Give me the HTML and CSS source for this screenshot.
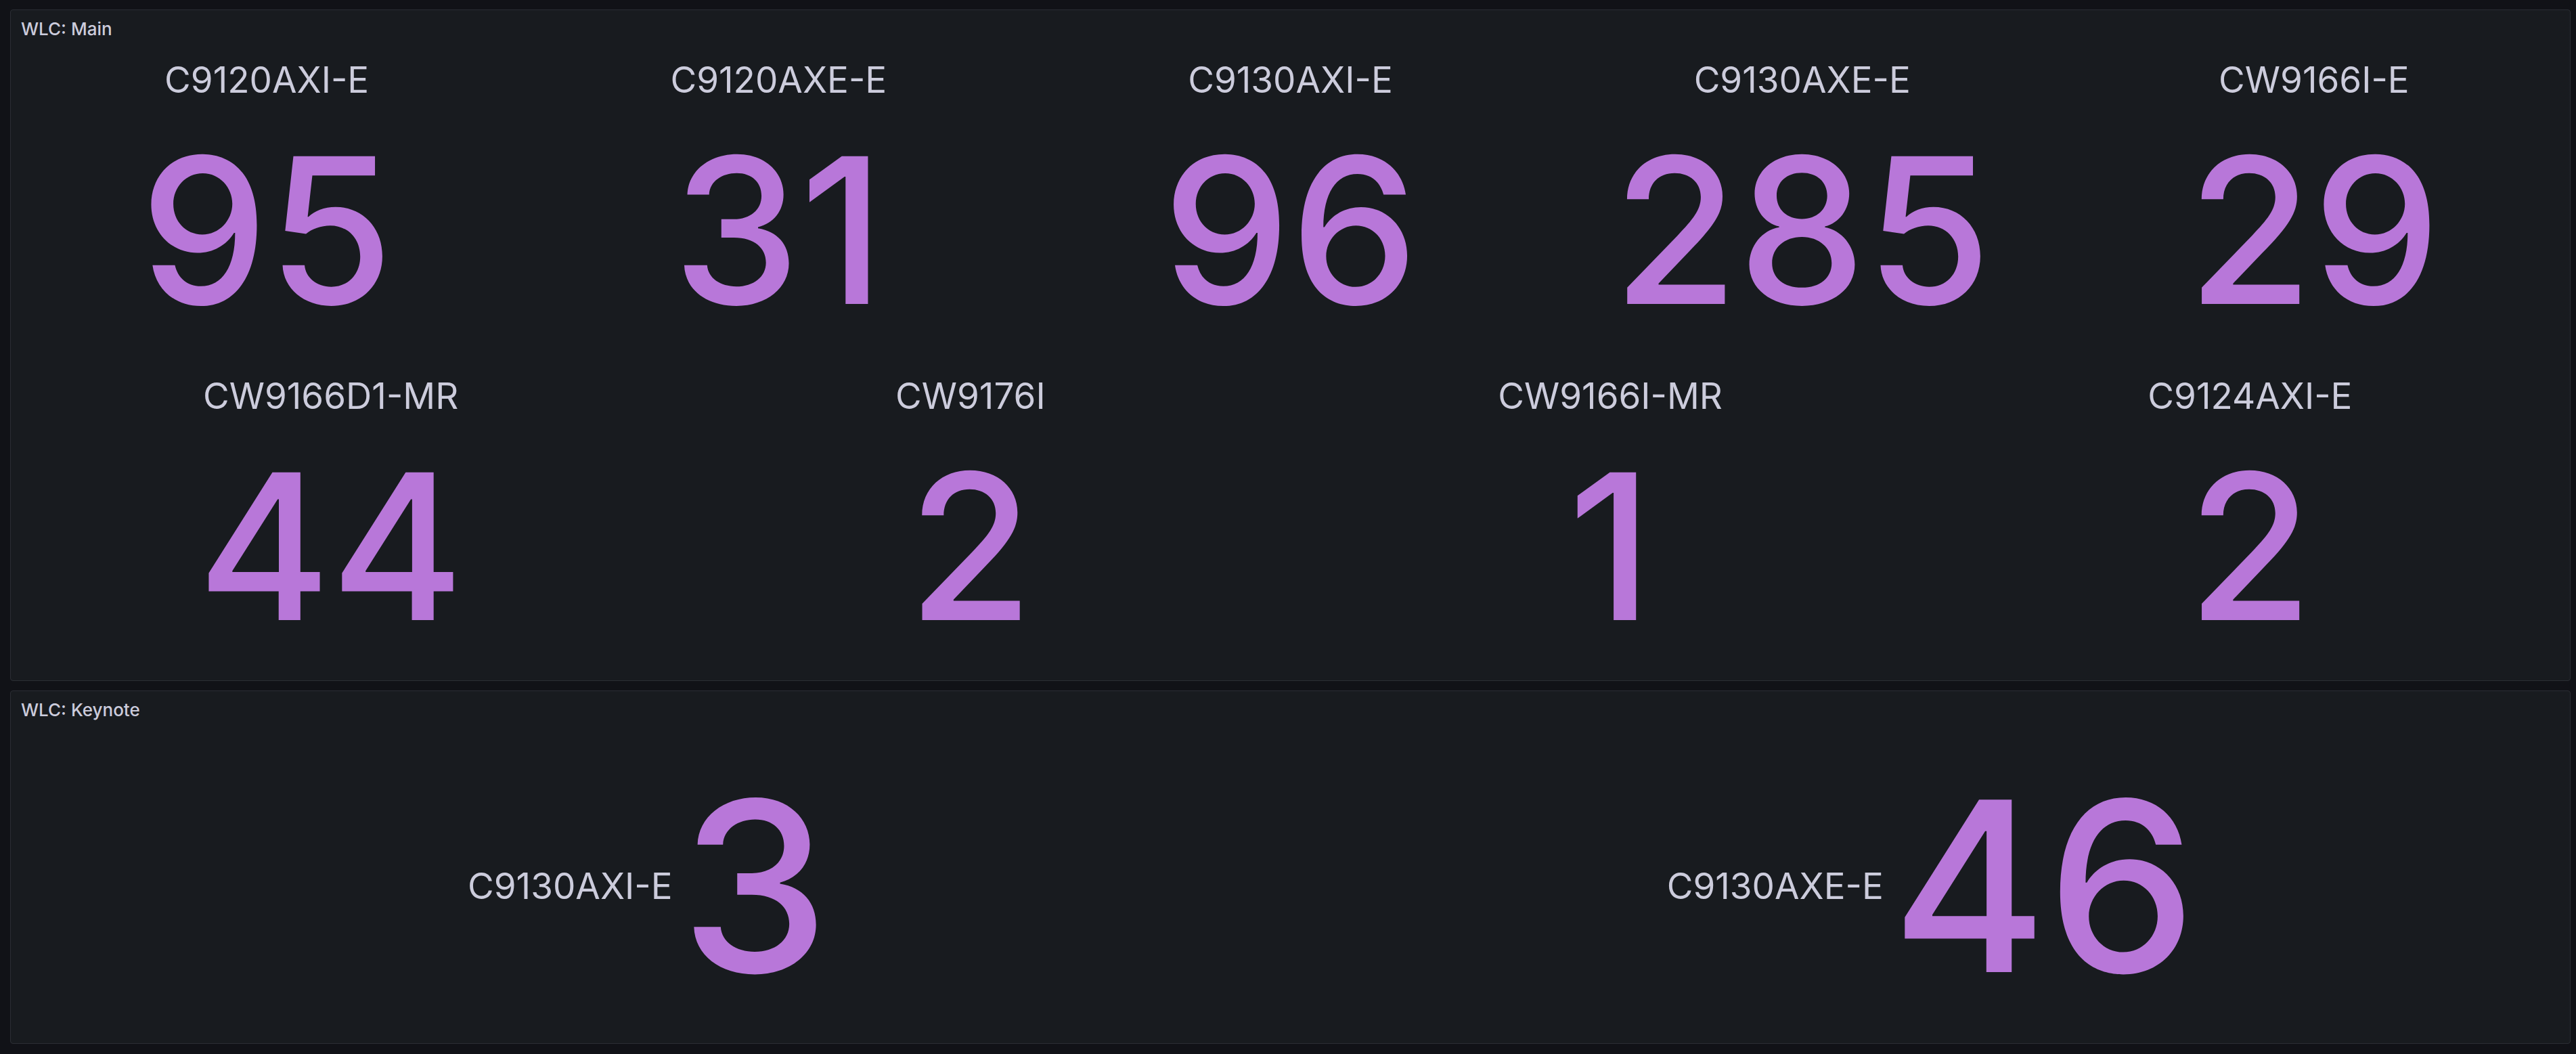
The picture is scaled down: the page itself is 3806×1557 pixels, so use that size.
FILE: index.html
```html
<!DOCTYPE html>
<html lang="en">
<head>
<meta charset="utf-8">
<title>WLC dashboard</title>
<link rel="stylesheet" href="styles.css">
</head>
<body>
<main class="dashboard">
  <section class="panel panel-main">
    <header class="panel-header"><h2 class="panel-title">WLC: Main</h2></header>
    <div class="panel-body">
      <div class="stat-row cols-5">
        <div class="stat"><div class="stat-name">C9120AXI-E</div><div class="stat-value">95</div></div>
        <div class="stat"><div class="stat-name">C9120AXE-E</div><div class="stat-value">31</div></div>
        <div class="stat"><div class="stat-name">C9130AXI-E</div><div class="stat-value">96</div></div>
        <div class="stat"><div class="stat-name">C9130AXE-E</div><div class="stat-value">285</div></div>
        <div class="stat"><div class="stat-name">CW9166I-E</div><div class="stat-value">29</div></div>
      </div>
      <div class="stat-row cols-4">
        <div class="stat"><div class="stat-name">CW9166D1-MR</div><div class="stat-value">44</div></div>
        <div class="stat"><div class="stat-name">CW9176I</div><div class="stat-value">2</div></div>
        <div class="stat"><div class="stat-name">CW9166I-MR</div><div class="stat-value">1</div></div>
        <div class="stat"><div class="stat-name">C9124AXI-E</div><div class="stat-value">2</div></div>
      </div>
    </div>
  </section>
  <section class="panel panel-keynote">
    <header class="panel-header"><h2 class="panel-title">WLC: Keynote</h2></header>
    <div class="panel-body wide">
      <div class="stat-wide"><div class="stat-name">C9130AXI-E</div><div class="stat-value big">3</div></div>
      <div class="stat-wide"><div class="stat-name">C9130AXE-E</div><div class="stat-value big">46</div></div>
    </div>
  </section>
</main>
</body>
</html>
```

FILE: styles.css
```css
html, body {
  margin: 0;
  padding: 0;
  background: #111217;
  font-family: Inter, "Noto Sans", sans-serif;
  color: #ccccdc;
}

.dashboard {
  box-sizing: border-box;
  width: 3806px;
  height: 1557px;
  padding: 14px 8px 15px 15px;
  display: flex;
  flex-direction: column;
  gap: 14px;
}

.panel {
  box-sizing: border-box;
  background: #181b1f;
  border: 1px solid #2b2e34;
  border-radius: 4px;
  display: flex;
  flex-direction: column;
}

.panel-main { height: 992px; }
.panel-keynote { height: 522px; }

.panel-header {
  height: 56px;
  flex: none;
  padding: 0 15px;
}

.panel-title {
  margin: 0;
  font-size: 26px;
  font-weight: 500;
  line-height: 56px;
  color: #ccccdc;
}

.panel-body {
  flex: 1;
  display: flex;
  flex-direction: column;
}

.stat-row {
  flex: 1;
  display: grid;
}

.cols-5 { grid-template-columns: repeat(5, 1fr); }
.cols-4 { grid-template-columns: repeat(4, 1fr); }

.stat {
  display: flex;
  flex-direction: column;
  align-items: center;
  padding-top: 21px;
}

.stat-name {
  font-size: 53px;
  line-height: 1;
  font-weight: 400;
  color: #ccccdc;
  white-space: nowrap;
}

.stat-value {
  font-size: 300px;
  line-height: 1;
  font-weight: 500;
  color: #b877d9;
  margin-top: 45px;
  white-space: nowrap;
}

.panel-body.wide {
  flex-direction: row;
  align-items: center;
  justify-content: space-between;
  padding: 0 552px 0 675px;
}

.stat-wide {
  display: flex;
  flex-direction: row;
  align-items: center;
  gap: 12px;
}

.stat-value.big {
  font-size: 350px;
  margin-top: 0;
}
```
